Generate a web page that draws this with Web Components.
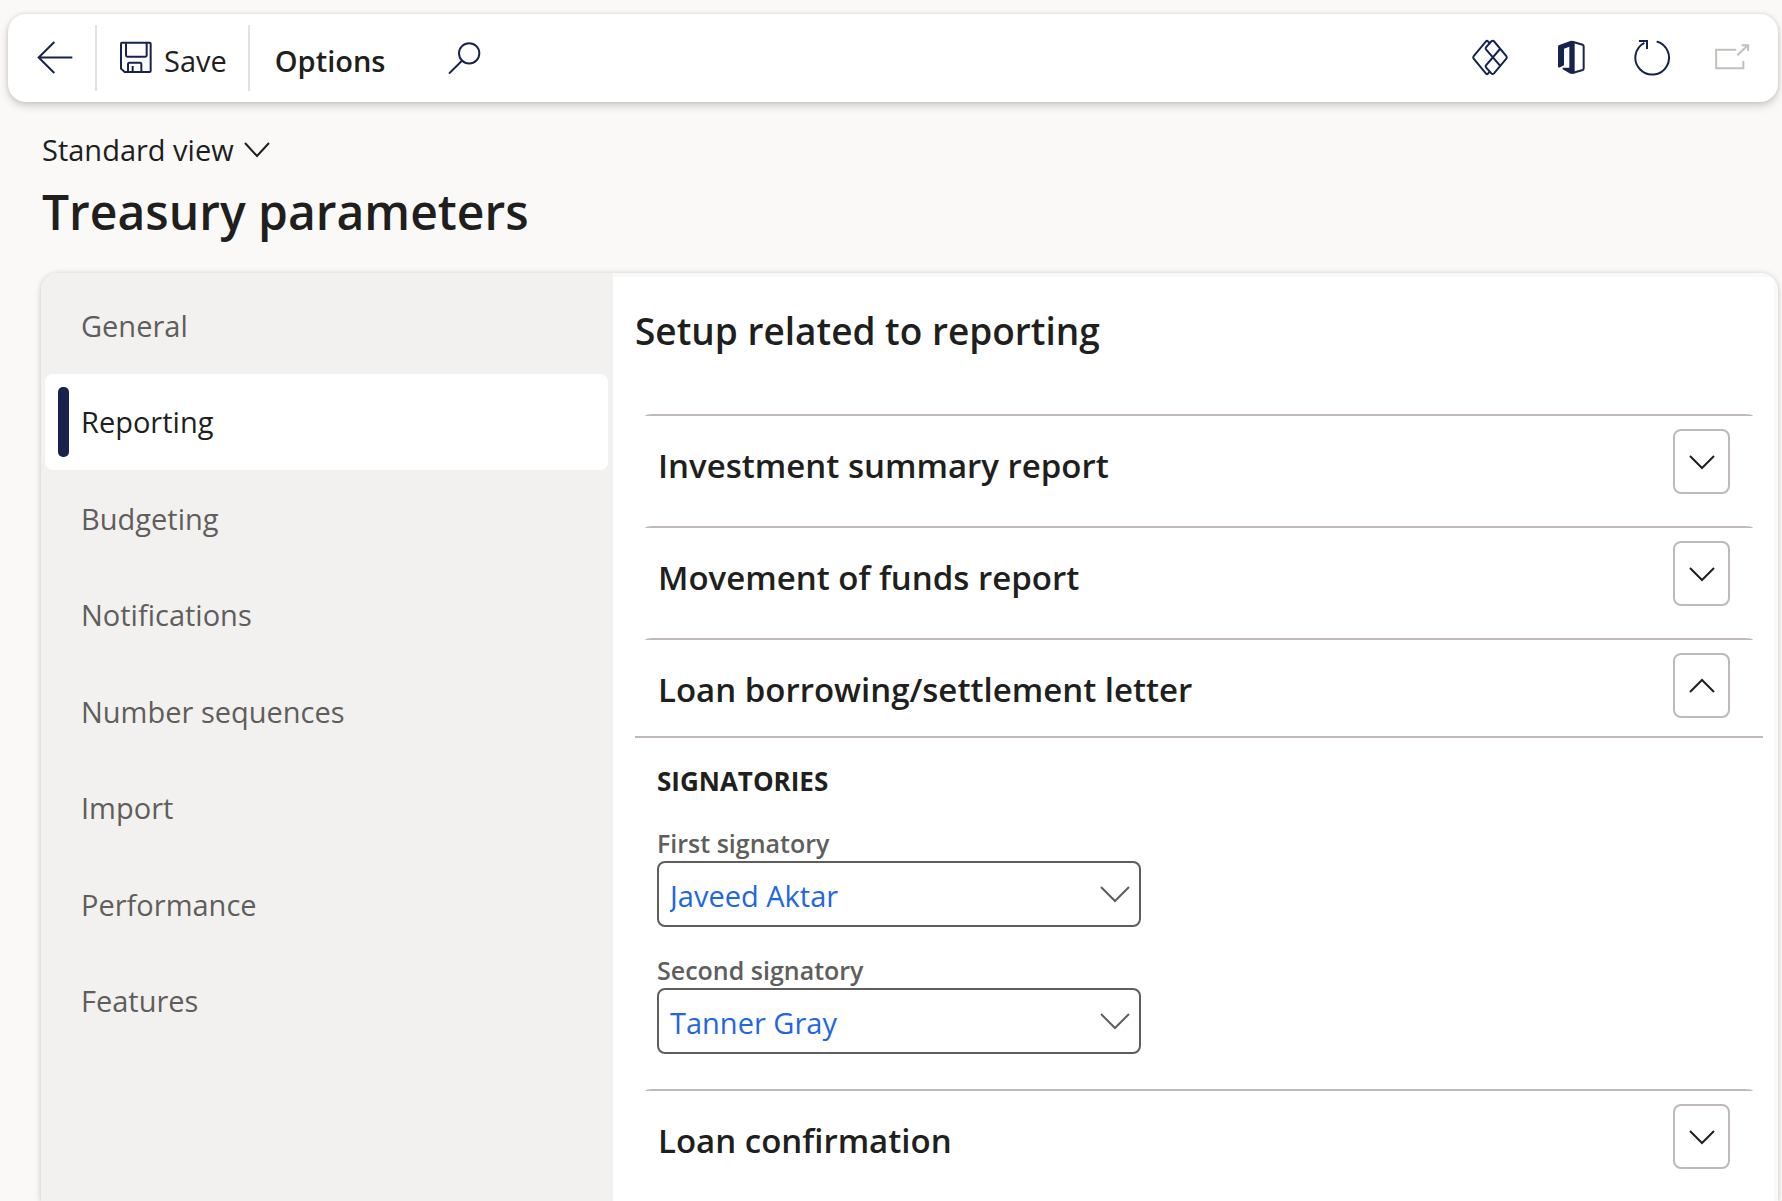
<!DOCTYPE html>
<html lang="en">
<head>
<meta charset="utf-8">
<title>Treasury parameters</title>
<style>
  html, body { height: 100%; }
  body {
    margin: 0;
    overflow: hidden;
    background: #faf9f7;
    color: #201f1e;
    font-family: "Open Sans", "Noto Sans", sans-serif;
    font-size: 29px;
  }
</style>
</head>
<body>
<app-page>
  <command-bar slot="bar"></command-bar>
  <page-header slot="header" view="Standard view">Treasury parameters</page-header>
  <side-nav slot="nav">
    <nav-item>General</nav-item>
    <nav-item current>Reporting</nav-item>
    <nav-item>Budgeting</nav-item>
    <nav-item>Notifications</nav-item>
    <nav-item>Number sequences</nav-item>
    <nav-item>Import</nav-item>
    <nav-item>Performance</nav-item>
    <nav-item>Features</nav-item>
  </side-nav>
  <tab-panel heading="Setup related to reporting">
    <fast-tab heading="Investment summary report"></fast-tab>
    <fast-tab heading="Movement of funds report"></fast-tab>
    <fast-tab heading="Loan borrowing/settlement letter" open>
      <field-group heading="SIGNATORIES">
        <lookup-field label="First signatory" value="Javeed Aktar"></lookup-field>
        <lookup-field label="Second signatory" value="Tanner Gray"></lookup-field>
      </field-group>
    </fast-tab>
    <fast-tab heading="Loan confirmation"></fast-tab>
  </tab-panel>
</app-page>

<script>
const define = (name, render) => customElements.define(name, class extends HTMLElement {
  constructor() { super(); this.attachShadow({ mode: 'open' }); }
  connectedCallback() { this.shadowRoot.innerHTML = render(this); }
});

/* name: [width, height, viewBox, markup] */
const ICONS = {
  back: [37, 37, '111 117 111 111', '<path d="M163 126 116 172.500 163 219M116 172.500H217"/>'],
  save: [34, 35, '357 120 102 105', '<path d="M366 128H449Q452 128 452 131V213Q452 216 449 216H374L363 206V131Q363 128 366 128ZM378 128V166Q378 170 382 170H436Q440 170 440 166V128M384 216V192Q384 188 388 188H420Q424 188 424 192V216M398 198V216"/>'],
  search: [35, 35, '1341 117 105 105', '<circle cx="1407.500" cy="157" r="30.500"/><path d="M1385 180 1347 218"/>'],
  power: [41, 39, '93 114 123 117', '<path d="M149 130 144 124Q141 121 138 124L101 168Q98 172 101 176L138 221Q141 224 144 221L149 215"/><path d="M138 148Q136 145 138 142L154 124Q158 121 162 124L199 168Q202 172 199 176L162 220Q158 224 154 220L138 202Q136 199 138 196L180 147M138 148 180 197"/>'],
  office: [33, 39, '348 114 99 117', '<path fill="currentColor" stroke="none" fill-rule="evenodd" d="M354 140Q354 136 358 135L391 123Q394 122 397 123L404 126V220L397 221Q394 222 391 221L368 208V203H388V140L372 146V196L357 203L354 200Z"/><path d="M397 125 428 134Q431 135 431 139V205Q431 209 428 210L397 219"/>'],
  refresh: [38, 39, '579 114 114 117', '<path d="M650 124.500A50.500 50.500 0 1 1 613 128.500M597 123H621V147"/>'],
  popout: [35, 29, '825 129 105 87', '<path d="M889 149H828.500V204.500H910V183M892 166 922 137M905 136H924.500V153"/>'],
  down: [30, 18, '0 0 30 18', '<path d="M3 2 15 15 27 2"/>'],
  lookup: [32, 20, '0 0 32 20', '<path d="M2 3 16 17 30 3"/>'],
  expand: [30, 18, '0 0 30 18', '<path d="M3 3 15 15 27 3"/>'],
  collapse: [30, 18, '0 0 30 18', '<path d="M3 15 15 3 27 15"/>']
};

define('ui-icon', el => {
  const [w, h, box, body] = ICONS[el.getAttribute('name')];
  const stroke = box.startsWith('0 0') ? 2 : 6;
  return `<style>:host{display:block;flex:none;line-height:0}svg{display:block}</style>
  <svg width="${w}" height="${h}" viewBox="${box}" fill="none" stroke="currentColor" stroke-width="${stroke}" aria-hidden="true">${body}</svg>`;
});

define('app-page', () => `
<style>
  :host { display: flex; flex-direction: column; min-height: 100vh; box-sizing: border-box; padding: 14px 4px 0 8px; }
  .frame { display: flex; flex: 1; margin-left: 33px; border-radius: 18px 18px 0 0; box-shadow: 0 1px 6px rgba(0,0,0,.22); }
  main { display: flex; flex: 1; min-width: 0; border-radius: 18px 18px 0 0; overflow: hidden; background: #faf9f8; }
</style>
<slot name="bar"></slot>
<slot name="header"></slot>
<div class="frame"><main><slot name="nav"></slot><slot></slot></main></div>`);

define('command-bar', () => `
<style>
  :host { display: block; border-radius: 18px; background: #fff; box-shadow: 0 4px 8px rgba(0,0,0,.17), 0 0 4px rgba(0,0,0,.12); }
  .bar { display: flex; align-items: center; height: 87px; padding-bottom: 1px; }
  button { display: flex; align-items: center; height: 100%; margin: 0; padding: 0; border: 0; background: none; color: #17224d; font: inherit; cursor: pointer; }
  button:disabled { color: #c3bfbc; }
  span { padding-top: 6px; line-height: 40px; color: #201f1e; }
  .sep { width: 2px; height: 66px; background: #e3e1e0; }
  .back { padding: 0 21px 0 29px; }
  .save { padding: 0 21px 0 22px; gap: 11px; }
  .options { padding: 0 62px 0 25px; font-weight: 600; }
  .tools { display: flex; gap: 44px; height: 100%; margin-left: auto; padding-right: 28px; }
</style>
<div class="bar" role="toolbar" aria-label="Actions">
  <button class="back" aria-label="Back"><ui-icon name="back"></ui-icon></button>
  <div class="sep"></div>
  <button class="save"><ui-icon name="save"></ui-icon><span>Save</span></button>
  <div class="sep"></div>
  <button class="options"><span>Options</span></button>
  <button aria-label="Search"><ui-icon name="search"></ui-icon></button>
  <div class="tools">
    <button aria-label="Power Apps"><ui-icon name="power"></ui-icon></button>
    <button aria-label="Open in Microsoft Office"><ui-icon name="office"></ui-icon></button>
    <button aria-label="Refresh"><ui-icon name="refresh"></ui-icon></button>
    <button aria-label="Open in new window" disabled><ui-icon name="popout"></ui-icon></button>
  </div>
</div>`);

define('page-header', el => `
<style>
  :host { display: block; padding: 28px 0 25px 34px; }
  button { display: flex; align-items: center; gap: 8px; margin: 0; padding: 0; border: 0; background: none; color: inherit; font: inherit; line-height: 40px; cursor: pointer; }
  h1 { margin: 0; padding-top: 6px; font-size: 48px; line-height: 72px; font-weight: 600; }
</style>
<button aria-haspopup="true">${el.getAttribute('view')}<ui-icon name="down"></ui-icon></button>
<h1><slot></slot></h1>`);

define('side-nav', () => `
<style>
  :host { display: block; flex: none; width: 572px; box-sizing: border-box; padding: 5px 5px 0 4px; background: #f3f1ef; }
  nav { display: flex; flex-direction: column; justify-content: space-between; min-height: 771px; }
</style>
<nav aria-label="Sections"><slot></slot></nav>`);

define('nav-item', el => {
  const current = el.hasAttribute('current');
  return `
<style>
  :host { display: block; color: #605e5c; }
  a { display: flex; align-items: center; gap: 12px; padding-left: 13px; border-radius: 8px; line-height: 96px; color: inherit; text-decoration: none; }
  i { width: 11px; height: 70px; border-radius: 5px; }
  .current { background: #fff; color: #201f1e; }
  .current i { background: #17224d; }
</style>
<a href="#" ${current ? 'class="current" aria-current="page"' : ''}><i></i><slot></slot></a>`;
});

define('tab-panel', el => `
<style>
  :host { display: block; flex: 1; min-width: 0; box-sizing: border-box; margin: 4px 4px 0 0; padding: 30px 11px 0 22px; background: #fff; }
  h2 { margin: 0 0 59px; font-size: 37px; line-height: 48px; font-weight: 600; }
</style>
<h2>${el.getAttribute('heading')}</h2>
<slot></slot>`);

define('fast-tab', el => {
  const open = el.hasAttribute('open');
  return `
<style>
  :host { display: block; }
  header { display: flex; align-items: flex-start; justify-content: space-between; margin: 0 10px; padding: 13px 23px 24px 13px; border-top: 2px solid #bfbab7; border-radius: 8px / 2px; }
  header.open { padding-bottom: 10px; }
  h3 { margin: 0; font-size: 33px; line-height: 73px; font-weight: 600; }
  button { display: flex; align-items: center; justify-content: center; box-sizing: border-box; width: 57px; height: 65px; margin: 0; padding: 0; border: 2px solid #bfbab7; border-radius: 8px; background: #fff; color: #201f1e; cursor: pointer; }
  section { border-top: 2px solid #bfbab7; padding: 27px 22px 35px; }
</style>
<header class="${open ? 'open' : ''}">
  <h3>${el.getAttribute('heading')}</h3>
  <button aria-label="${el.getAttribute('heading')}" aria-expanded="${open}"><ui-icon name="${open ? 'collapse' : 'expand'}"></ui-icon></button>
</header>
${open ? '<section><slot></slot></section>' : ''}`;
});

define('field-group', el => `
<style>
  :host { display: block; }
  h4 { margin: 0 0 30px; font-size: 26px; line-height: 32px; font-weight: 700; }
  div { display: flex; flex-direction: column; gap: 27px; }
</style>
<h4>${el.getAttribute('heading')}</h4>
<div><slot></slot></div>`);

define('lookup-field', el => `
<style>
  :host { display: block; }
  label { display: block; margin-bottom: 2px; font-size: 25px; line-height: 32px; font-weight: 600; color: #605e5c; }
  div { display: grid; align-items: center; width: 484px; max-width: 100%; color: #605e5c; }
  select, ui-icon { grid-area: 1 / 1; }
  select { appearance: none; box-sizing: border-box; width: 100%; height: 66px; margin: 0; padding: 2px 50px 0 11px; border: 2px solid #605e5c; border-radius: 8px; background: #fff; color: #2266e3; font: inherit; }
  ui-icon { justify-self: end; margin-right: 10px; pointer-events: none; }
</style>
<label for="lookup">${el.getAttribute('label')}</label>
<div>
  <select id="lookup"><option>${el.getAttribute('value')}</option></select>
  <ui-icon name="lookup"></ui-icon>
</div>`);
</script>
</body>
</html>
